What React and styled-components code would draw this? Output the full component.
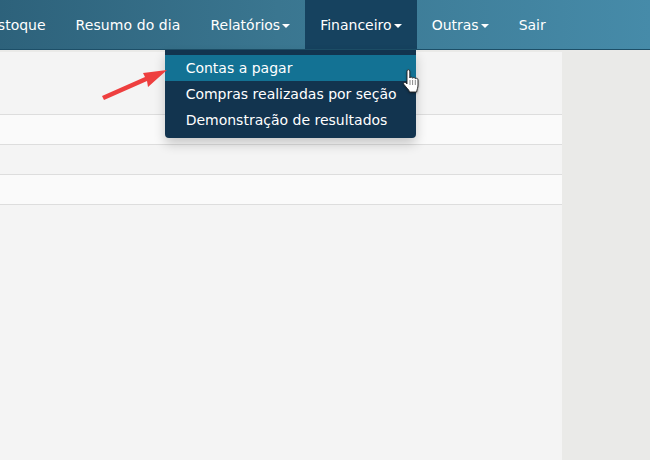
import React from 'react';
import styled, { createGlobalStyle } from 'styled-components';

const Global = createGlobalStyle`
  html, body { margin: 0; padding: 0; height: 460px; overflow: hidden; background: #eaeae8; }
  body { font-family: "DejaVu Sans", Verdana, sans-serif; }
`;

const Page = styled.div`
  width: 650px;
  height: 460px;
  overflow: hidden;
  position: relative;
  background: #eaeae8;
`;

const Nav = styled.nav`
  display: flex;
  height: 49px;
  border-bottom: 1px solid #1d4f68;
  background: linear-gradient(to right, #2c6079 0%, #3a7690 45%, #468ba9 100%);
  margin-left: -26px;
  width: 676px;
`;

const Item = styled.div`
  position: relative;
  display: flex;
  align-items: center;
  gap: 2px;
  padding: 0 15px;
  height: 49px;
  color: #fff;
  font-size: 14px;
  letter-spacing: ${p => (p.$wide ? '0.08px' : '0')};
  white-space: nowrap;
  background: ${p => (p.$open ? '#16425f' : 'transparent')};
`;

const Caret = styled.span`
  width: 0;
  height: 0;
  margin-top: 2px;
  border-left: 4px solid transparent;
  border-right: 4px solid transparent;
  border-top: 4px solid #fff;
`;

const Menu = styled.ul`
  position: absolute;
  top: 50px;
  right: 1px;
  width: 251px;
  margin: 0;
  padding: 5px 0;
  list-style: none;
  box-sizing: border-box;
  background: #12344f;
  border-radius: 0 0 4px 4px;
  box-shadow: 0 6px 12px rgba(0, 0, 0, 0.2);
  z-index: 2;
`;

const MenuItem = styled.li`
  height: 26px;
  line-height: 26px;
  padding-left: 21px;
  color: #fff;
  font-size: 14px;
  white-space: nowrap;
  background: ${p => (p.$active ? '#137294' : 'transparent')};
`;

const Main = styled.main`
  width: 562px;
  height: 408px;
  margin-top: 2px;
  padding-top: 62px;
  box-sizing: border-box;
  background: #f4f4f4;
`;

const Row = styled.div`
  height: 30px;
  box-sizing: border-box;
  border-top: 1px solid #dddddd;
  background: ${p => (p.$odd ? '#fafafa' : '#f4f4f4')};
`;

const Arrow = styled.svg`
  position: absolute;
  left: 100px;
  top: 68px;
  z-index: 3;
`;

const Hand = styled.svg`
  position: absolute;
  left: 402px;
  top: 69px;
  z-index: 4;
  filter: drop-shadow(0 1px 1px rgba(0, 0, 0, 0.35));
`;

export default function App() {
  return (
    <Page>
      <Global />
      <Nav>
        <Item>Estoque</Item>
        <Item $wide>Resumo do dia</Item>
        <Item>Relatórios<Caret /></Item>
        <Item $open>
          Financeiro<Caret />
          <Menu>
            <MenuItem $active>Contas a pagar</MenuItem>
            <MenuItem>Compras realizadas por seção</MenuItem>
            <MenuItem>Demonstração de resultados</MenuItem>
          </Menu>
        </Item>
        <Item>Outras<Caret /></Item>
        <Item>Sair</Item>
      </Nav>
      <Main>
        <Row $odd />
        <Row />
        <Row $odd />
        <Row />
      </Main>
      <Arrow width="70" height="34" viewBox="0 0 70 34">
        <path d="M2 28 L4 32 L47 13 L48 19 L67 2 L43 5 L45 9 Z" fill="#ee3f3f" />
      </Arrow>
      <Hand width="18" height="24" viewBox="0 0 18 24">
        <path
          d="M5 2 C5 .3 7.8 .3 7.8 2 L7.8 9 C8 7.8 10.5 7.8 10.6 9.2 C10.8 8.2 13.2 8.2 13.3 9.8 C13.6 9 16 9 16 10.8 L16 16 C16 19 15 20 14.6 23 L7.5 23 C7 20.5 5 19.5 2 15.5 C.8 14 2.5 12.5 4 13.8 L5 15 Z"
          fill="#fff"
          stroke="#222"
          strokeWidth="0.9"
        />
        <path d="M8 11 L8 16 M10.6 11 L10.6 16 M13.3 11 L13.3 16" stroke="#555" strokeWidth="0.7" />
      </Hand>
    </Page>
  );
}
